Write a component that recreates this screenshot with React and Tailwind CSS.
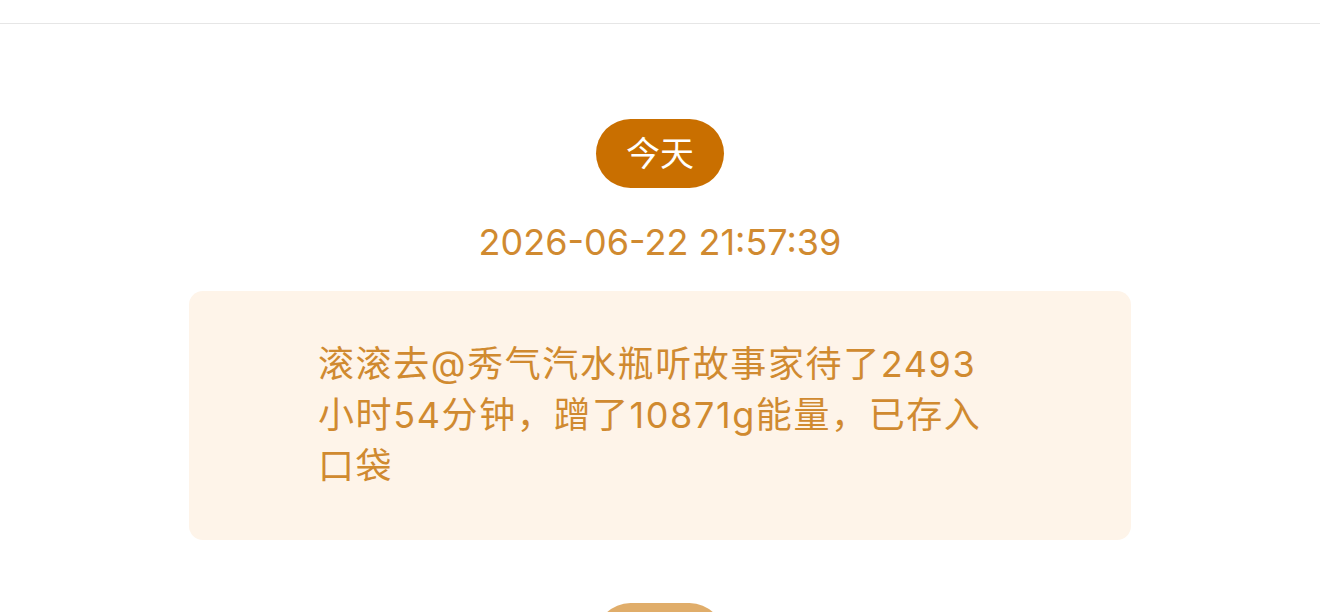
export default function App() {
  const records = [
    {
      day: '今天',
      time: '2026-06-22 21:57:39',
      text: '滚滚去@秀气汽水瓶听故事家待了2493小时54分钟，蹭了10871g能量，已存入口袋',
      active: true,
    },
    {
      day: '昨天',
      time: '2026-06-21 20:12:05',
      text: '滚滚去@秀气汽水瓶听故事家待了12小时，蹭了320g能量，已存入口袋',
      active: false,
    },
  ];

  return (
    <div
      className="w-[1320px] h-[612px] overflow-hidden bg-white"
      style={{ fontFamily: 'Inter, "Noto Sans CJK SC", sans-serif' }}
    >
      {/* 顶部栏 */}
      <div className="h-[24px] border-b border-[#e6e6e6]" />

      {/* 记录列表 */}
      <div className="flex flex-col items-center pt-[95px] gap-[63px]">
        {records.map((r) => (
          <RecordGroup key={r.time} {...r} />
        ))}
      </div>
    </div>
  );
}

function RecordGroup({ day, time, text, active }) {
  return (
    <div className="flex flex-col items-center">
      <span
        className={`h-[69px] w-[128px] rounded-full flex items-center justify-center text-white text-[34px] ${
          active ? 'bg-[#c96f00]' : 'bg-[#e0ad6a]'
        }`}
      >
        {day}
      </span>
      <div className="mt-[30px] h-[48px] leading-[48px] text-[36px] text-[#d08a30]">{time}</div>
      <div className="mt-[25px] w-[942px] rounded-[14px] bg-[#fef4e9] pl-[129px] pr-[134px] py-[48px]">
        <p className="text-[36px] leading-[51px] tracking-[1.6px] text-[#d08a30]">{text}</p>
      </div>
    </div>
  );
}
